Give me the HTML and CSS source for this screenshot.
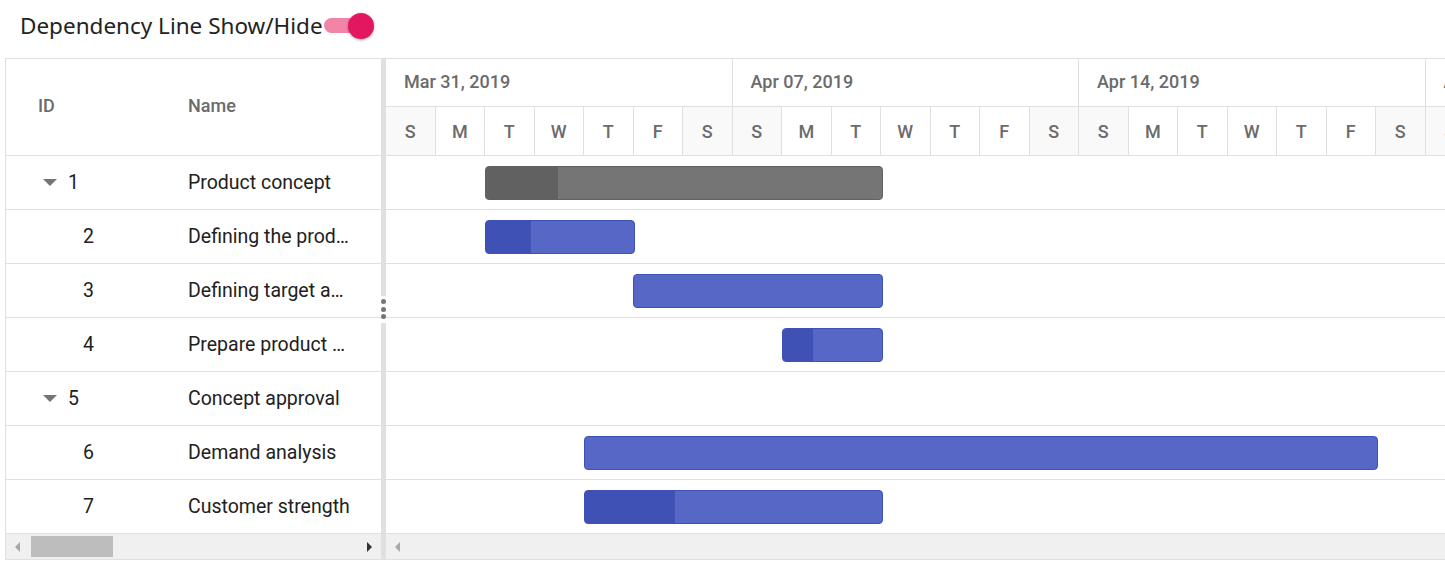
FILE: index.html
```html
<!DOCTYPE html>
<html lang="en">
<head>
  <meta charset="UTF-8" />
  <title>Gantt - Dependency Line</title>
  <link rel="stylesheet" href="styles.css">
</head>
<body>

  <div class="toolbar">
    <span class="title">Dependency Line Show/Hide</span>
    <span class="switch">
      <span class="track"></span>
      <span class="knob"></span>
    </span>
  </div>

  <div class="gantt">
    <div class="grid-pane">
      <div class="grid-header">
        <div class="col-id">ID</div>
        <div class="col-name">Name</div>
      </div>

      <div class="grid-row">
        <div class="col-id"><span class="tree-icon"></span>1</div>
        <div class="col-name">Product concept</div>
      </div>
      <div class="grid-row">
        <div class="col-id child">2</div>
        <div class="col-name">Defining the product and its usage</div>
      </div>
      <div class="grid-row">
        <div class="col-id child">3</div>
        <div class="col-name">Defining target audience</div>
      </div>
      <div class="grid-row">
        <div class="col-id child">4</div>
        <div class="col-name">Prepare product sketch and notes</div>
      </div>
      <div class="grid-row">
        <div class="col-id"><span class="tree-icon"></span>5</div>
        <div class="col-name">Concept approval</div>
      </div>
      <div class="grid-row">
        <div class="col-id child">6</div>
        <div class="col-name">Demand analysis</div>
      </div>
      <div class="grid-row">
        <div class="col-id child">7</div>
        <div class="col-name">Customer strength</div>
      </div>

      <div class="hscroll">
        <span class="arrow left"></span>
        <span class="thumb"></span>
        <span class="fill"></span>
        <span class="arrow right"></span>
      </div>
    </div>

    <div class="splitter">
      <div class="split-bar"></div>
      <div class="split-handle"><i></i><i></i><i></i></div>
      <div class="split-bar"></div>
    </div>

    <div class="chart-pane">
      <div class="timeline">
        <div class="weeks">
          <div class="week">Mar 31, 2019</div>
          <div class="week">Apr 07, 2019</div>
          <div class="week">Apr 14, 2019</div>
          <div class="week">Apr 21, 2019</div>
        </div>
        <div class="days">
          <div class="day weekend">S</div><div class="day">M</div><div class="day">T</div><div class="day">W</div><div class="day">T</div><div class="day">F</div><div class="day weekend">S</div>
          <div class="day weekend">S</div><div class="day">M</div><div class="day">T</div><div class="day">W</div><div class="day">T</div><div class="day">F</div><div class="day weekend">S</div>
          <div class="day weekend">S</div><div class="day">M</div><div class="day">T</div><div class="day">W</div><div class="day">T</div><div class="day">F</div><div class="day weekend">S</div>
          <div class="day weekend">S</div><div class="day">M</div><div class="day">T</div><div class="day">W</div><div class="day">T</div><div class="day">F</div><div class="day weekend">S</div>
        </div>
      </div>

      <div class="chart-row">
        <div class="bar parent" style="margin-left:99px;width:398px"><div class="progress" style="width:72px"></div></div>
      </div>
      <div class="chart-row">
        <div class="bar" style="margin-left:99px;width:150px"><div class="progress" style="width:45px"></div></div>
      </div>
      <div class="chart-row">
        <div class="bar" style="margin-left:247px;width:250px"><div class="progress" style="width:0"></div></div>
      </div>
      <div class="chart-row">
        <div class="bar" style="margin-left:396px;width:101px"><div class="progress" style="width:30px"></div></div>
      </div>
      <div class="chart-row"></div>
      <div class="chart-row">
        <div class="bar" style="margin-left:198px;width:794px"><div class="progress" style="width:0"></div></div>
      </div>
      <div class="chart-row">
        <div class="bar" style="margin-left:198px;width:299px"><div class="progress" style="width:90px"></div></div>
      </div>

      <div class="hscroll">
        <span class="arrow left"></span>
        <span class="fill"></span>
      </div>
    </div>
  </div>

</body>
</html>
```

FILE: styles.css
```css
* {
  box-sizing: border-box;
  margin: 0;
  padding: 0;
}

body {
  font-family: Roboto, "Liberation Sans", sans-serif;
  background: #fff;
  color: #212121;
  overflow: hidden;
}

/* toolbar with switch */
.toolbar {
  height: 58px;
  display: flex;
  align-items: center;
  padding-left: 20px;
  padding-bottom: 7px;
}

.title {
  font-family: "Noto Sans", "Open Sans", sans-serif;
  font-size: 22.5px;
  color: #222;
}

.switch {
  position: relative;
  width: 52px;
  height: 26px;
  display: flex;
  align-items: center;
  margin-left: 1px;
}

.track {
  width: 36px;
  height: 15px;
  border-radius: 8px;
  background: #f284a8;
}

.knob {
  position: absolute;
  left: 24px;
  top: 0;
  width: 26px;
  height: 26px;
  border-radius: 50%;
  background: #e3175f;
  box-shadow: 0 1px 3px rgba(0,0,0,0.35);
}

/* gantt */
.gantt {
  margin-left: 5px;
  width: 1460px;
  display: flex;
  border: 1px solid #e0e0e0;
}

.grid-pane {
  width: 375px;
  flex: 0 0 375px;
}

.grid-header {
  height: 97px;
  display: flex;
  align-items: center;
  padding-bottom: 4px;
  border-bottom: 1px solid #e0e0e0;
  font-size: 18px;
  font-weight: 500;
  color: #6b6b6b;
}

.grid-row {
  height: 54px;
  display: flex;
  align-items: center;
  border-bottom: 1px solid #e0e0e0;
  font-size: 19.5px;
}

.col-id {
  width: 164px;
  flex: 0 0 164px;
  padding-left: 32px;
  display: flex;
  align-items: center;
}

.col-id.child {
  padding-left: 77px;
}

.tree-icon {
  width: 0;
  height: 0;
  margin-left: 5px;
  margin-right: 11px;
  border-left: 7px solid transparent;
  border-right: 7px solid transparent;
  border-top: 7px solid #757575;
}

.col-name {
  flex: 1;
  padding-left: 18px;
  padding-right: 30px;
  white-space: nowrap;
  overflow: hidden;
  text-overflow: ellipsis;
}

/* scrollbars */
.hscroll {
  height: 25px;
  display: flex;
  align-items: center;
  background: #f0f0f0;
}

.hscroll .arrow {
  width: 0;
  height: 0;
  border-top: 5px solid transparent;
  border-bottom: 5px solid transparent;
}

.hscroll .arrow.left {
  margin-left: 9px;
  border-right: 5px solid #a8a8a8;
}

.hscroll .arrow.right {
  margin-right: 9px;
  border-left: 5px solid #333;
}

.hscroll .thumb {
  width: 82px;
  height: 21px;
  margin-left: 11px;
  background: #bdbdbd;
}

.hscroll .fill {
  flex: 1;
}

/* splitter */
.splitter {
  width: 5px;
  flex: 0 0 5px;
  display: flex;
  flex-direction: column;
}

.split-bar {
  flex: 1;
  background: #e0e0e0;
}

.split-handle {
  height: 27px;
  display: flex;
  flex-direction: column;
  align-items: center;
  justify-content: center;
  gap: 2.5px;
  background: #fff;
}

.split-handle i {
  width: 5px;
  height: 5px;
  border-radius: 50%;
  background: #757575;
}

/* chart */
.chart-pane {
  flex: 1;
  overflow: hidden;
}

.timeline {
  height: 97px;
  border-bottom: 1px solid #e0e0e0;
  color: #6b6b6b;
  font-size: 18px;
  font-weight: 500;
}

.weeks {
  display: flex;
  height: 48px;
  border-bottom: 1px solid #e0e0e0;
}

.week {
  flex: 0 0 346.5px;
  border-right: 1px solid #e0e0e0;
  padding-left: 18px;
  padding-bottom: 3px;
  display: flex;
  align-items: center;
  white-space: nowrap;
}

.days {
  display: flex;
  height: 48px;
}

.day {
  flex: 0 0 49.5px;
  border-right: 1px solid #e0e0e0;
  display: flex;
  align-items: center;
  justify-content: center;
}

.day.weekend {
  background: #f9f9f9;
}

.chart-row {
  height: 54px;
  display: flex;
  align-items: center;
  border-bottom: 1px solid #e0e0e0;
}

.bar {
  flex: 0 0 auto;
  height: 34px;
  border: 1px solid #3f51b5;
  border-radius: 4px;
  background: #5767c6;
  overflow: hidden;
  display: flex;
}

.bar .progress {
  height: 100%;
  background: #3f51b5;
}

.bar.parent {
  background: #757575;
  border-color: #616161;
}

.bar.parent .progress {
  background: #616161;
}
```
